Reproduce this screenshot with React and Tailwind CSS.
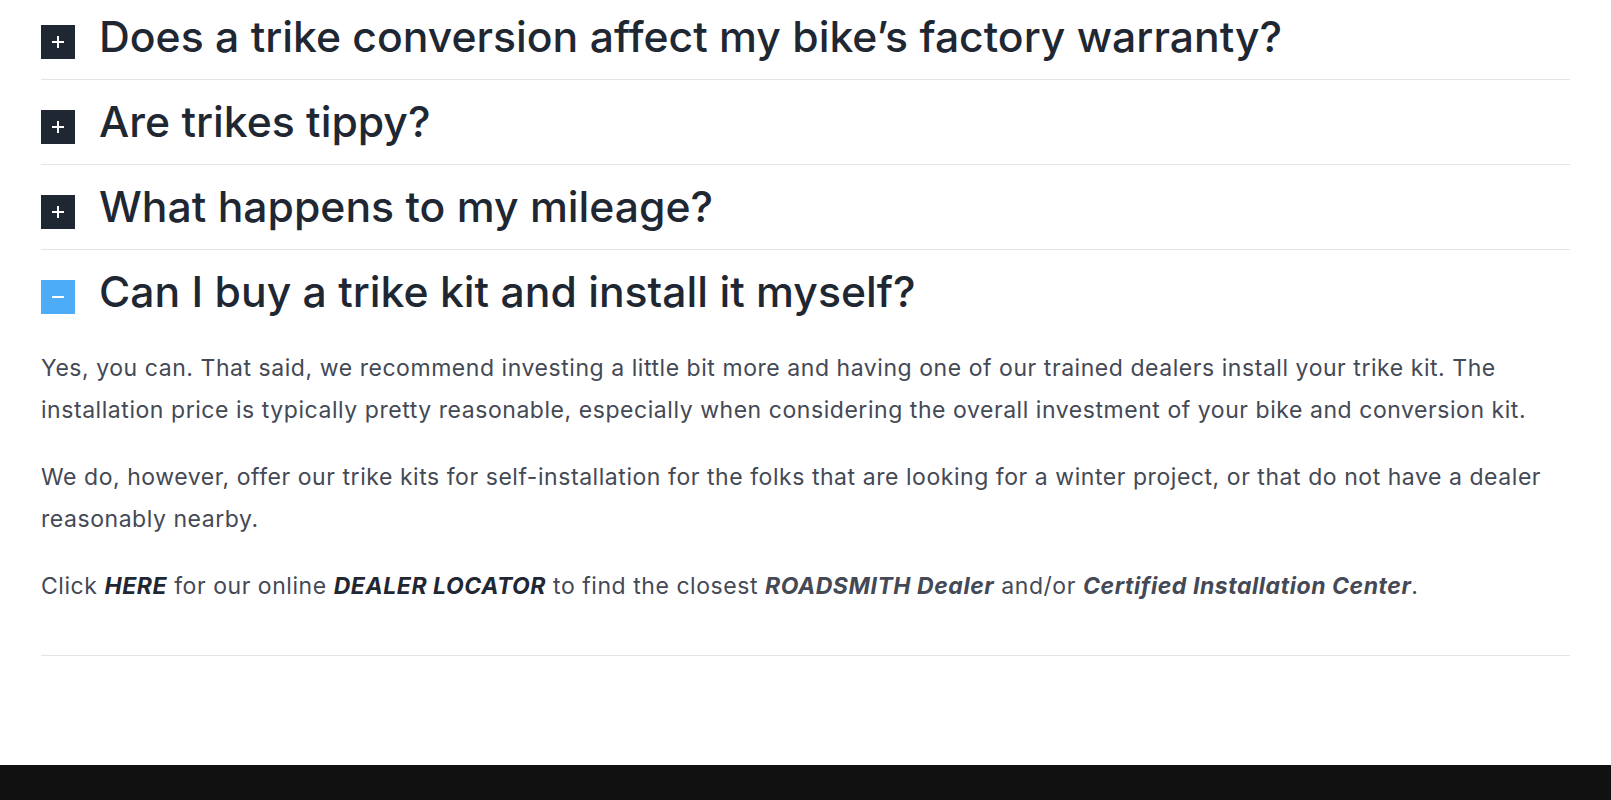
import React, { useState } from 'react';

const faqs = [
  { q: "Does a trike conversion affect my bike\u2019s factory warranty?" },
  { q: 'Are trikes tippy?' },
  { q: 'What happens to my mileage?' },
  { q: 'Can I buy a trike kit and install it myself?', open: true },
];

const Toggle = ({ open }) => (
  <span
    className={`mt-[14px] flex h-[34px] w-[34px] shrink-0 items-center justify-center ${
      open ? 'bg-[#4dacf8]' : 'bg-[#1f2733]'
    }`}
  >
    {open ? (
      <span className="block h-[2px] w-[12px] bg-white" />
    ) : (
      <span className="relative block h-[12px] w-[12px]">
        <span className="absolute left-0 top-[5px] h-[2px] w-[12px] bg-white" />
        <span className="absolute left-[5px] top-0 h-[12px] w-[2px] bg-white" />
      </span>
    )}
  </span>
);

const Answer = () => (
  <div className="pb-[47px] pt-[14px] text-[23px] leading-[41.5px] tracking-[0.55px] text-[#444955]">
    <p>
      Yes, you can. That said, we recommend investing a little bit more and having one of our trained dealers
      install your trike kit. The installation price is typically pretty reasonable, especially when considering
      the overall investment of your bike and conversion kit.
    </p>
    <p className="mt-[26px]">
      We do, however, offer our trike kits for self-installation for the folks that are looking for a winter
      project, or that do not have a dealer reasonably nearby.
    </p>
    <p className="mt-[26px]">
      Click <a className="font-bold italic text-[#1f2733]">HERE</a> for our online{' '}
      <a className="font-bold italic text-[#1f2733]">DEALER LOCATOR</a> to find the closest{' '}
      <strong className="font-bold italic">ROADSMITH Dealer</strong> and/or{' '}
      <strong className="font-bold italic">Certified Installation Center</strong>.
    </p>
  </div>
);

export default function App() {
  const [openIdx, setOpenIdx] = useState(3);
  return (
    <div className="flex min-h-[800px] flex-col bg-white" style={{ fontFamily: 'Inter, "Noto Sans", sans-serif' }}>
      <section className="-mt-[5px] px-[41px] pb-[108px]">
        {faqs.map((f, i) => (
          <div key={i} className="border-b border-[#e4e4e4]">
            <button
              className="flex w-full items-start gap-[24px] py-4 text-left"
              onClick={() => setOpenIdx(openIdx === i ? null : i)}
            >
              <Toggle open={openIdx === i} />
              <h3 className="text-[42.7px] font-medium leading-[52px] text-[#1f2733]">{f.q}</h3>
            </button>
            {openIdx === i && <Answer />}
          </div>
        ))}
      </section>
      <footer className="mt-auto h-[35px] bg-[#111111]" />
    </div>
  );
}
